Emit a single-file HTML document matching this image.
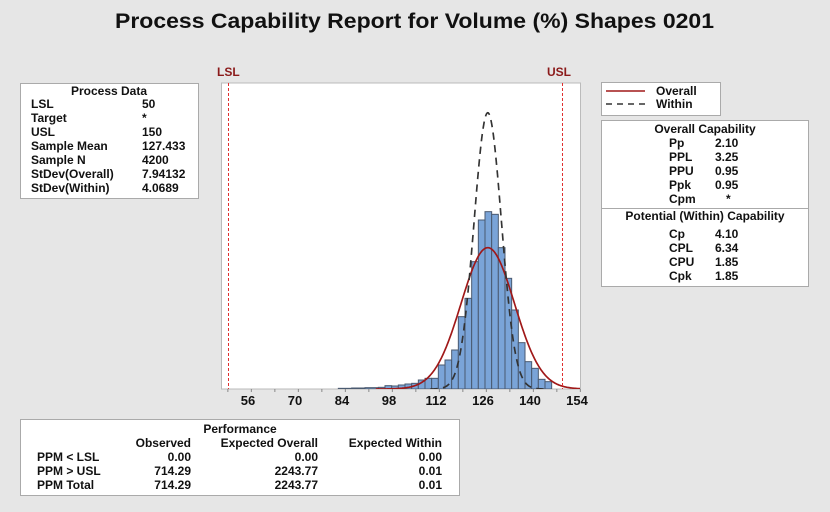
<!DOCTYPE html>
<html><head><meta charset="utf-8"><style>
body{margin:0;width:830px;height:512px;overflow:hidden;background:#e6e6e6}
svg{display:block}
text{font-family:"Liberation Sans",sans-serif;font-weight:bold;font-size:12px;fill:#111}
</style></head><body>
<svg id="s" width="830" height="512" viewBox="0 0 830 512">
<defs><clipPath id="cp"><rect x="222" y="83" width="358" height="306"/></clipPath></defs>
<rect x="0" y="0" width="830" height="512" fill="#e6e6e6"/>
<text x="115" y="28" style="font-size:21px" textLength="599" lengthAdjust="spacingAndGlyphs">Process Capability Report for Volume (%) Shapes 0201</text>
<rect x="20.5" y="83.5" width="178" height="115" fill="#fff" stroke="#aaa"/>
<text x="109" y="95" text-anchor="middle">Process Data</text>
<g>
<text x="31" y="108">LSL</text><text x="142" y="108">50</text>
<text x="31" y="122">Target</text><text x="142" y="122">*</text>
<text x="31" y="136">USL</text><text x="142" y="136">150</text>
<text x="31" y="150">Sample Mean</text><text x="142" y="150">127.433</text>
<text x="31" y="164">Sample N</text><text x="142" y="164">4200</text>
<text x="31" y="178">StDev(Overall)</text><text x="142" y="178">7.94132</text>
<text x="31" y="192">StDev(Within)</text><text x="142" y="192">4.0689</text>
</g>
<text x="217" y="76" style="fill:#8b1a1a">LSL</text>
<text x="547" y="76" style="fill:#8b1a1a">USL</text>
<rect x="221.5" y="83" width="359" height="306" fill="#fff" stroke="#bbb"/>
<g clip-path="url(#cp)"><g id="hist" transform="translate(200 60) scale(0.33333)"></g></g>
<line x1="228.5" y1="83" x2="228.5" y2="389" stroke="#e03030" stroke-dasharray="3,2"/>
<line x1="562.5" y1="83" x2="562.5" y2="389" stroke="#e03030" stroke-dasharray="3,2"/>
<g id="ticks"></g>
<rect x="601.5" y="82.5" width="119" height="33" fill="#fff" stroke="#aaa"/>
<line x1="606" y1="91" x2="645" y2="91" stroke="#a01818" stroke-width="1.5"/>
<line x1="606" y1="104" x2="645" y2="104" stroke="#333" stroke-width="1.5" stroke-dasharray="6,5"/>
<text x="656" y="95">Overall</text><text x="656" y="108">Within</text>
<rect x="601.5" y="120.5" width="207" height="166" fill="#fff" stroke="#aaa"/>
<line x1="601" y1="208.5" x2="808" y2="208.5" stroke="#aaa"/>
<text x="705" y="133" text-anchor="middle">Overall Capability</text>
<text x="669" y="147">Pp</text><text x="715" y="147">2.10</text>
<text x="669" y="161">PPL</text><text x="715" y="161">3.25</text>
<text x="669" y="175">PPU</text><text x="715" y="175">0.95</text>
<text x="669" y="189">Ppk</text><text x="715" y="189">0.95</text>
<text x="669" y="203">Cpm</text><text x="726" y="203">*</text>
<text x="705" y="220" text-anchor="middle">Potential (Within) Capability</text>
<text x="669" y="238">Cp</text><text x="715" y="238">4.10</text>
<text x="669" y="252">CPL</text><text x="715" y="252">6.34</text>
<text x="669" y="266">CPU</text><text x="715" y="266">1.85</text>
<text x="669" y="280">Cpk</text><text x="715" y="280">1.85</text>
<rect x="20.5" y="419.5" width="439" height="76" fill="#fff" stroke="#aaa"/>
<text x="240" y="433" text-anchor="middle">Performance</text>
<text x="191" y="447" text-anchor="end">Observed</text><text x="318" y="447" text-anchor="end">Expected Overall</text><text x="442" y="447" text-anchor="end">Expected Within</text>
<text x="191" y="461" text-anchor="end">0.00</text><text x="318" y="461" text-anchor="end">0.00</text><text x="442" y="461" text-anchor="end">0.00</text>
<text x="191" y="475" text-anchor="end">714.29</text><text x="318" y="475" text-anchor="end">2243.77</text><text x="442" y="475" text-anchor="end">0.01</text>
<text x="191" y="489" text-anchor="end">714.29</text><text x="318" y="489" text-anchor="end">2243.77</text><text x="442" y="489" text-anchor="end">0.01</text>
<text x="37" y="461">PPM &lt; LSL</text>
<text x="37" y="475">PPM &gt; USL</text>
<text x="37" y="489">PPM Total</text>
</svg>
<script>
var NS="http://www.w3.org/2000/svg";
function el(p,n,a){var e=document.createElementNS(NS,n);for(var k in a)e.setAttribute(k,a[k]);p.appendChild(e);return e;}
var h=document.getElementById("hist");
var bars=[[415,455,985],[455,495,984],[495,535,983],[535,555,982],[555,575,977],[575,595,978],[595,615,975],[615,635,972],[635,655,970],[655,675,960],[675,695,955],[695,715,955],[715,735,915],[735,755,900],[755,775,870],[775,795,770],[795,815,715],[815,835,605],[835,855,480],[855,875,455],[875,895,463],[895,915,563],[915,935,655],[935,955,750],[955,975,848],[975,995,905],[995,1015,925],[1015,1035,958],[1035,1055,965]];
bars.forEach(function(b){el(h,"rect",{x:b[0],y:b[2],width:b[1]-b[0],height:987-b[2],fill:"#7aa4d8",stroke:"#4a5a70","stroke-width":3});});
function zx(v){return 144+(v-56)*10.07;}
function path(m,s,amp){var d="";for(var v=m-4.2*s;v<=Math.min(m+4.2*s,158);v+=0.25){var x=zx(v),y=987-amp*Math.exp(-0.5*Math.pow((v-m)/s,2));d+=(d?"L":"M")+x.toFixed(1)+" "+y.toFixed(1);}return d;}
el(h,"path",{d:path(127.43,7.94,424),fill:"none",stroke:"#a01818","stroke-width":5});
el(h,"path",{d:path(127.43,4.07,829),fill:"none",stroke:"#333","stroke-width":5,"stroke-dasharray":"22,16"});
var t=document.getElementById("ticks");
for(var v=50;v<=156;v+=7){var x=248+(v-56)*3.357;if(x<222||x>581)continue;el(t,"line",{x1:x,y1:389,x2:x,y2:392,stroke:"#888"});}
[56,70,84,98,112,126,140,154].forEach(function(v){var x=248+(v-56)*3.357;var e=el(t,"text",{x:x,y:405,"text-anchor":"middle",style:"font-size:13px"});e.textContent=v;});
</script>
</body></html>
